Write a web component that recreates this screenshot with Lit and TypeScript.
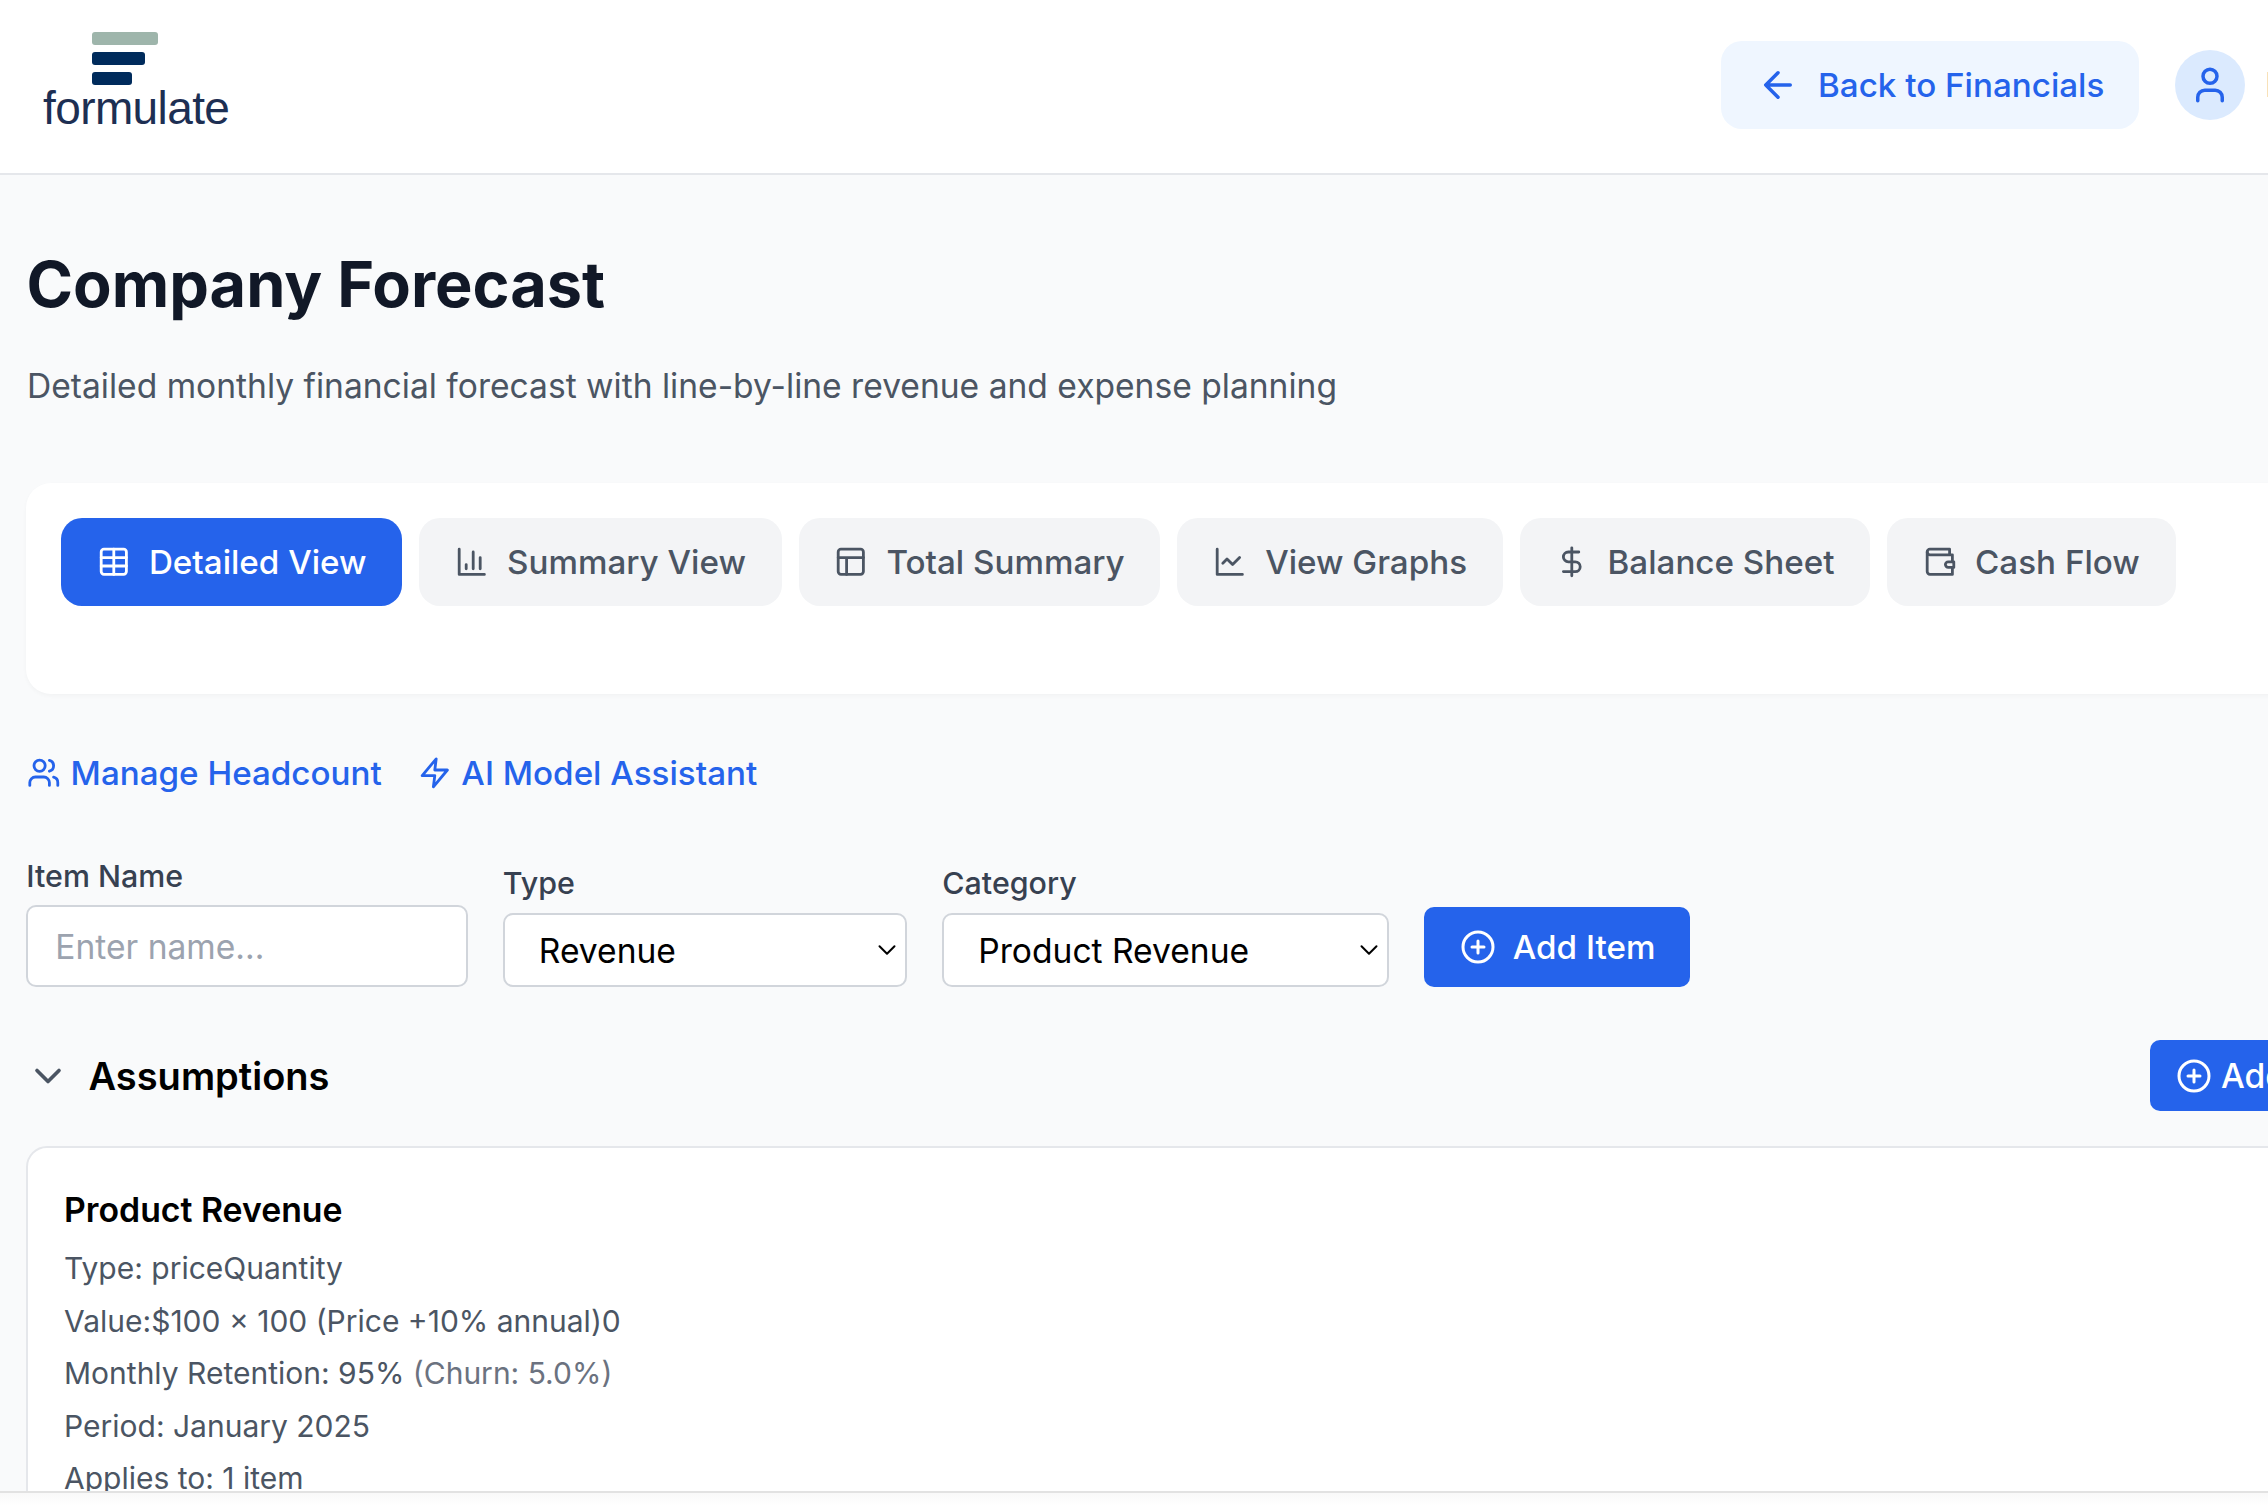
import { LitElement, html, css, svg } from "lit";
import { customElement } from "lit/decorators.js";

const ic = {
  table: svg`<rect x="3" y="3" width="18" height="18" rx="2"/><path d="M12 3v18M3 9h18M3 15h18"/>`,
  bars: svg`<path d="M3 3v18h18M18 17V9M13 17V5M8 17v-3"/>`,
  layout: svg`<rect x="3" y="3" width="18" height="18" rx="2"/><path d="M3 9h18M9 21V9"/>`,
  line: svg`<path d="M3 3v18h18"/><path d="m19 9-5 5-4-4-3 3"/>`,
  dollar: svg`<path d="M12 2v20M17 5H9.5a3.5 3.5 0 0 0 0 7h5a3.5 3.5 0 0 1 0 7H6"/>`,
  wallet: svg`<path d="M21 12V7H5a2 2 0 0 1 0-4h14v4"/><path d="M3 5v14a2 2 0 0 0 2 2h16v-5"/><path d="M18 12a2 2 0 0 0 0 4h4v-4Z"/>`,
  users: svg`<path d="M16 21v-2a4 4 0 0 0-4-4H6a4 4 0 0 0-4 4v2"/><circle cx="9" cy="7" r="4"/><path d="M22 21v-2a4 4 0 0 0-3-3.87M16 3.13a4 4 0 0 1 0 7.75"/>`,
  zap: svg`<path d="M13 2 3 14h9l-1 8 10-12h-9l1-8z"/>`,
  plus: svg`<circle cx="12" cy="12" r="10"/><path d="M8 12h8M12 8v8"/>`,
  arrow: svg`<path d="m12 19-7-7 7-7M19 12H5"/>`,
  user: svg`<path d="M19 21v-2a4 4 0 0 0-4-4H9a4 4 0 0 0-4 4v2"/><circle cx="12" cy="7" r="4"/>`,
  chev: svg`<path d="m6 9 6 6 6-6"/>`,
};
const icon = (p: unknown, cls = "") =>
  html`<svg class="ic ${cls}" viewBox="0 0 24 24" fill="none" stroke="currentColor" stroke-width="2" stroke-linecap="round" stroke-linejoin="round">${p}</svg>`;

const tabs: [string, unknown][] = [
  ["Detailed View", ic.table],
  ["Summary View", ic.bars],
  ["Total Summary", ic.layout],
  ["View Graphs", ic.line],
  ["Balance Sheet", ic.dollar],
  ["Cash Flow", ic.wallet],
];

@customElement("app-root")
export class AppRoot extends LitElement {
  static styles = css`
    :host {
      display: flex;
      flex-direction: column;
      width: 2268px;
      height: 1512px;
      overflow: hidden;
      background: #fff;
      font-family: Inter, "Liberation Sans", sans-serif;
      font-size: 33.6px;
      line-height: 50.4px;
    }
    * { box-sizing: border-box; }
    .ic { width: 33.6px; height: 33.6px; flex: none; display: block; }
    .ic.lg { width: 42px; height: 42px; }
    .ic.pl { width: 36px; height: 36px; }
    header {
      flex: none;
      height: 175px;
      width: 2500px;
      border-bottom: 2px solid #e5e7eb;
      display: flex;
      align-items: flex-start;
      padding-left: 43px;
      background: #fff;
    }
    .brand { flex: none; width: 1678px; padding-top: 32px; }
    .bars { display: flex; flex-direction: column; gap: 7px; margin-left: 49px; }
    .bars i { display: block; height: 13px; border-radius: 3px; background: #002b5c; }
    .bars i.a { width: 66px; background: #9eb5ab; }
    .bars i.b { width: 53px; }
    .bars i.c { width: 40px; }
    .word {
      font-family: "Liberation Sans", Arial, sans-serif;
      font-size: 46px;
      line-height: 46px;
      letter-spacing: -0.6px;
      color: #1d2f53;
    }
    .right { display: flex; align-items: center; height: 88px; margin-top: 41px; }
    .back {
      display: flex; align-items: center; gap: 19px;
      height: 88px; padding: 0 35px 0 36px;
      background: #eff6ff; color: #2563eb;
      border-radius: 21px; font-weight: 500; font-size: 33.2px;
    }
    .avatar {
      width: 70px; height: 70px; margin-left: 36px; border-radius: 50%;
      background: #dbeafe; color: #2563eb;
      display: flex; align-items: center; justify-content: center;
    }
    .name { margin-left: 20px; color: #374151; font-weight: 500; }
    main {
      flex: 1 1 0;
      min-height: 0;
      overflow: hidden;
      background: #f9fafb;
      padding: 72px 0 0 27px;
    }
    .inner { width: 2400px; }
    h1 { margin: 0 0 0 -0.5px; font-size: 63px; line-height: 75.6px; font-weight: 700; color: #111827; }
    .sub { margin: 38px 0 0; color: #4b5563; }
    .tabcard {
      margin: 72px 0 0 -1px;
      padding: 35px 35px 88px;
      height: 211px;
      background: #fff;
      border-radius: 25px;
      box-shadow: 0 2px 4px rgba(0,0,0,.03);
      display: flex; gap: 16.8px;
    }
    .tab {
      display: flex; align-items: center; gap: 18.5px;
      height: 88px; padding: 0 35.8px;
      border-radius: 21px;
      background: #f3f4f6; color: #4b5563;
      font-weight: 500; font-size: 33.2px;
    }
    .tab.on { background: #2563eb; color: #fff; }
    .links { display: flex; gap: 36px; margin-top: 54px; color: #2563eb; font-weight: 500; font-size: 33.2px; }
    .links div { display: flex; align-items: center; gap: 10px; }
    .form { display: flex; align-items: flex-end; gap: 36.5px; margin-top: 55.5px; }
    label { display: block; font-size: 30.4px; line-height: 44px; font-weight: 500; color: #374151; margin-bottom: 7.5px; }
    .sel label { margin-bottom: 8.5px; }
    input, select {
      display: block; font-family: inherit; font-size: 33.6px; background: #fff;
      border: 2px solid #d1d5db; border-radius: 10px; outline: none; color: #000;
    }
    .f0 { margin: 0 -1.4px 0 -0.7px; }
    input { width: 441.4px; height: 82px; padding: 0 27px; }
    input::placeholder { color: #9ca3af; opacity: 1; }
    .sel { position: relative; }
    select { appearance: none; -webkit-appearance: none; height: 74px; padding: 0 34px; }
    .s1 select { width: 404px; }
    .s2 { margin-left: -1px; }
    .s2 select { width: 447px; }
    .chev {
      position: absolute; right: 5px; bottom: 22px; width: 30px; height: 30px;
      color: #000; pointer-events: none; stroke-width: 1.6;
    }
    .add {
      display: flex; align-items: center; gap: 17px;
      height: 80px; padding: 0 34.5px 0 35.5px; margin-left: -1.5px;
      border-radius: 10px; background: #2563eb; color: #fff;
      font-weight: 500; font-size: 33.2px;
    }
    .sec { display: grid; grid-template-columns: 2123px auto; align-items: center; margin-top: 53px; height: 71px; justify-content: start; }
    .sec .l { display: flex; align-items: center; gap: 18.5px; margin-left: -1px; }
    .sec .ic { width: 44px; height: 44px; color: #4b5563; }
    .sec b { font-size: 38px; font-weight: 600; color: #000; }
    .add2 { height: 71px; width: 400px; padding: 0 26px; margin-left: 0; gap: 9px; font-size: 33.6px; }
    .add2 .ic { width: 36px; height: 36px; color: #fff; }
    .card {
      margin: 35px 0 0 -1px;
      padding: 37px 36px;
      background: #fff;
      border: 2px solid #e5e7eb;
      border-radius: 21px;
      height: 600px;
    }
    .card h3 { margin: 0 0 10.3px; font-size: 33.8px; line-height: 50.4px; font-weight: 600; color: #000; }
    .card p { margin: 0 0 8.5px; font-size: 30px; line-height: 44px; color: #4b5563; }
    .card span { color: #6b7280; }
    footer { flex: none; height: 21px; border-top: 2px solid #e2e2e2; background: linear-gradient(#f9f9f9, #fff 12px); }
  `;

  render() {
    return html`
      <header>
        <div class="brand">
          <div class="bars"><i class="a"></i><i class="b"></i><i class="c"></i></div>
          <div class="word">formulate</div>
        </div>
        <div class="right">
          <div class="back">${icon(ic.arrow, "lg")}Back to Financials</div>
          <div class="avatar">${icon(ic.user, "lg")}</div>
          <div class="name">Brian</div>
        </div>
      </header>
      <main>
        <div class="inner">
          <h1>Company Forecast</h1>
          <p class="sub">Detailed monthly financial forecast with line-by-line revenue and expense planning</p>
          <div class="tabcard">
            ${tabs.map(([t, p], i) => html`<div class="tab ${i === 0 ? "on" : ""}">${icon(p)}${t}</div>`)}
          </div>
          <div class="links">
            <div>${icon(ic.users)}Manage Headcount</div>
            <div>${icon(ic.zap)}AI Model Assistant</div>
          </div>
          <div class="form">
            <div class="f0"><label>Item Name</label><input placeholder="Enter name..." /></div>
            <div class="sel s1">
              <label>Type</label>
              <select><option>Revenue</option><option>Expense</option></select>
              ${icon(ic.chev, "chev")}
            </div>
            <div class="sel s2">
              <label>Category</label>
              <select><option>Product Revenue</option></select>
              ${icon(ic.chev, "chev")}
            </div>
            <div class="add">${icon(ic.plus, "pl")}Add Item</div>
          </div>
          <div class="sec">
            <div class="l">${icon(ic.chev)}<b>Assumptions</b></div>
            <div class="add add2">${icon(ic.plus)}Add Assumption</div>
          </div>
          <div class="card">
            <h3>Product Revenue</h3>
            <p>Type: priceQuantity</p>
            <p>Value:$100 × 100 (Price +10% annual)0</p>
            <p>Monthly Retention: 95% <span>(Churn: 5.0%)</span></p>
            <p>Period: January 2025</p>
            <p>Applies to: 1 item</p>
          </div>
        </div>
      </main>
      <footer></footer>
    `;
  }
}
